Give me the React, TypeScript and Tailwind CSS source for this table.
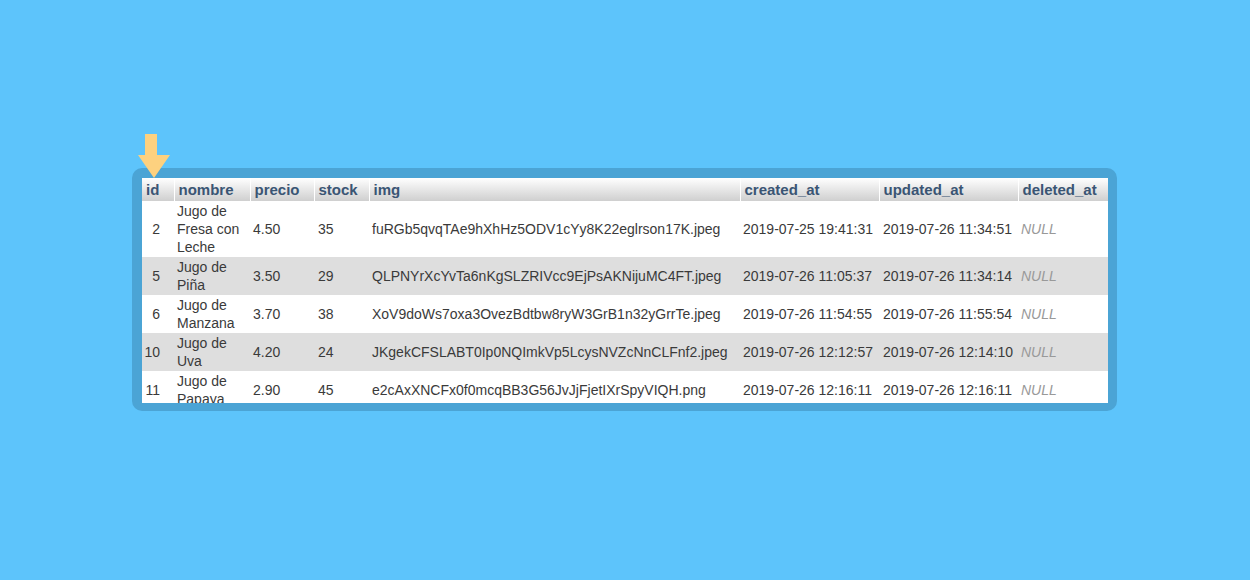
import React from "react";

const rows = [
  { id: "2", nombre: "Jugo de Fresa con Leche", precio: "4.50", stock: "35", img: "fuRGb5qvqTAe9hXhHz5ODV1cYy8K22eglrson17K.jpeg", created: "2019-07-25 19:41:31", updated: "2019-07-26 11:34:51" },
  { id: "5", nombre: "Jugo de Piña", precio: "3.50", stock: "29", img: "QLPNYrXcYvTa6nKgSLZRIVcc9EjPsAKNijuMC4FT.jpeg", created: "2019-07-26 11:05:37", updated: "2019-07-26 11:34:14" },
  { id: "6", nombre: "Jugo de Manzana", precio: "3.70", stock: "38", img: "XoV9doWs7oxa3OvezBdtbw8ryW3GrB1n32yGrrTe.jpeg", created: "2019-07-26 11:54:55", updated: "2019-07-26 11:55:54" },
  { id: "10", nombre: "Jugo de Uva", precio: "4.20", stock: "24", img: "JKgekCFSLABT0Ip0NQImkVp5LcysNVZcNnCLFnf2.jpeg", created: "2019-07-26 12:12:57", updated: "2019-07-26 12:14:10" },
  { id: "11", nombre: "Jugo de Papaya", precio: "2.90", stock: "45", img: "e2cAxXNCFx0f0mcqBB3G56JvJjFjetIXrSpyVIQH.png", created: "2019-07-26 12:16:11", updated: "2019-07-26 12:16:11" },
];

const headers = [
  { label: "id", w: "w-[32px]" },
  { label: "nombre", w: "w-[76px]" },
  { label: "precio", w: "w-[64px]" },
  { label: "stock", w: "w-[55px]" },
  { label: "img", w: "w-[371px]" },
  { label: "created_at", w: "w-[139px]" },
  { label: "updated_at", w: "w-[139px]" },
  { label: "deleted_at", w: "w-[90px]" },
];

const DownArrow = () => (
  <svg width="32" height="46" viewBox="0 0 32 46" className="absolute left-[6px] top-[-34px]">
    <polygon points="7,0 19,0 19,21 32,21 16,44 0,21 7,21" fill="#fdd17f" />
  </svg>
);

export default function App() {
  return (
    <div
      className="w-[1250px] h-[580px] bg-[#5dc4fb] pt-[168px] pl-[132px]"
      style={{ fontFamily: '"Liberation Sans", Arial, sans-serif' }}
    >
      <div className="relative w-[985px] h-[243px] bg-[#4ba4d5] rounded-[10px] pt-[10px] pl-[10px] pr-[9px] pb-[8px]">
        <DownArrow />
        <div className="h-[225px] overflow-hidden bg-white">
          <table className="table-fixed border-collapse w-[966px] text-[14px] text-[#3a3a3a]">
            <thead>
              <tr className="h-[23px] bg-gradient-to-b from-white to-[#cfcfcf]">
                {headers.map((h, i) => (
                  <th
                    key={h.label}
                    className={`${h.w} ${i > 0 ? "border-l border-white" : ""} text-left text-[15px] font-bold text-[#3a5574] pl-[4px] py-0 leading-[23px] whitespace-nowrap`}
                  >
                    {h.label}
                  </th>
                ))}
              </tr>
            </thead>
            <tbody>
              {rows.map((r, i) => (
                <tr key={r.id} className={i % 2 === 1 ? "bg-[#dedede]" : "bg-white"}>
                  <td className="text-right pr-[14px] py-[1px] leading-[18px] align-middle">{r.id}</td>
                  <td className="pl-[3px] pr-[2px] py-[1px] leading-[18px] align-middle">{r.nombre}</td>
                  <td className="pl-[3px] py-[1px] leading-[18px] align-middle">{r.precio}</td>
                  <td className="pl-[4px] py-[1px] leading-[18px] align-middle">{r.stock}</td>
                  <td className="pl-[3px] py-[1px] leading-[18px] align-middle whitespace-nowrap overflow-hidden">{r.img}</td>
                  <td className="pl-[3px] py-[1px] leading-[18px] align-middle whitespace-nowrap">{r.created}</td>
                  <td className="pl-[4px] py-[1px] leading-[18px] align-middle whitespace-nowrap">{r.updated}</td>
                  <td className="pl-[3px] py-[1px] leading-[18px] align-middle italic text-[#999]">NULL</td>
                </tr>
              ))}
            </tbody>
          </table>
        </div>
      </div>
    </div>
  );
}
